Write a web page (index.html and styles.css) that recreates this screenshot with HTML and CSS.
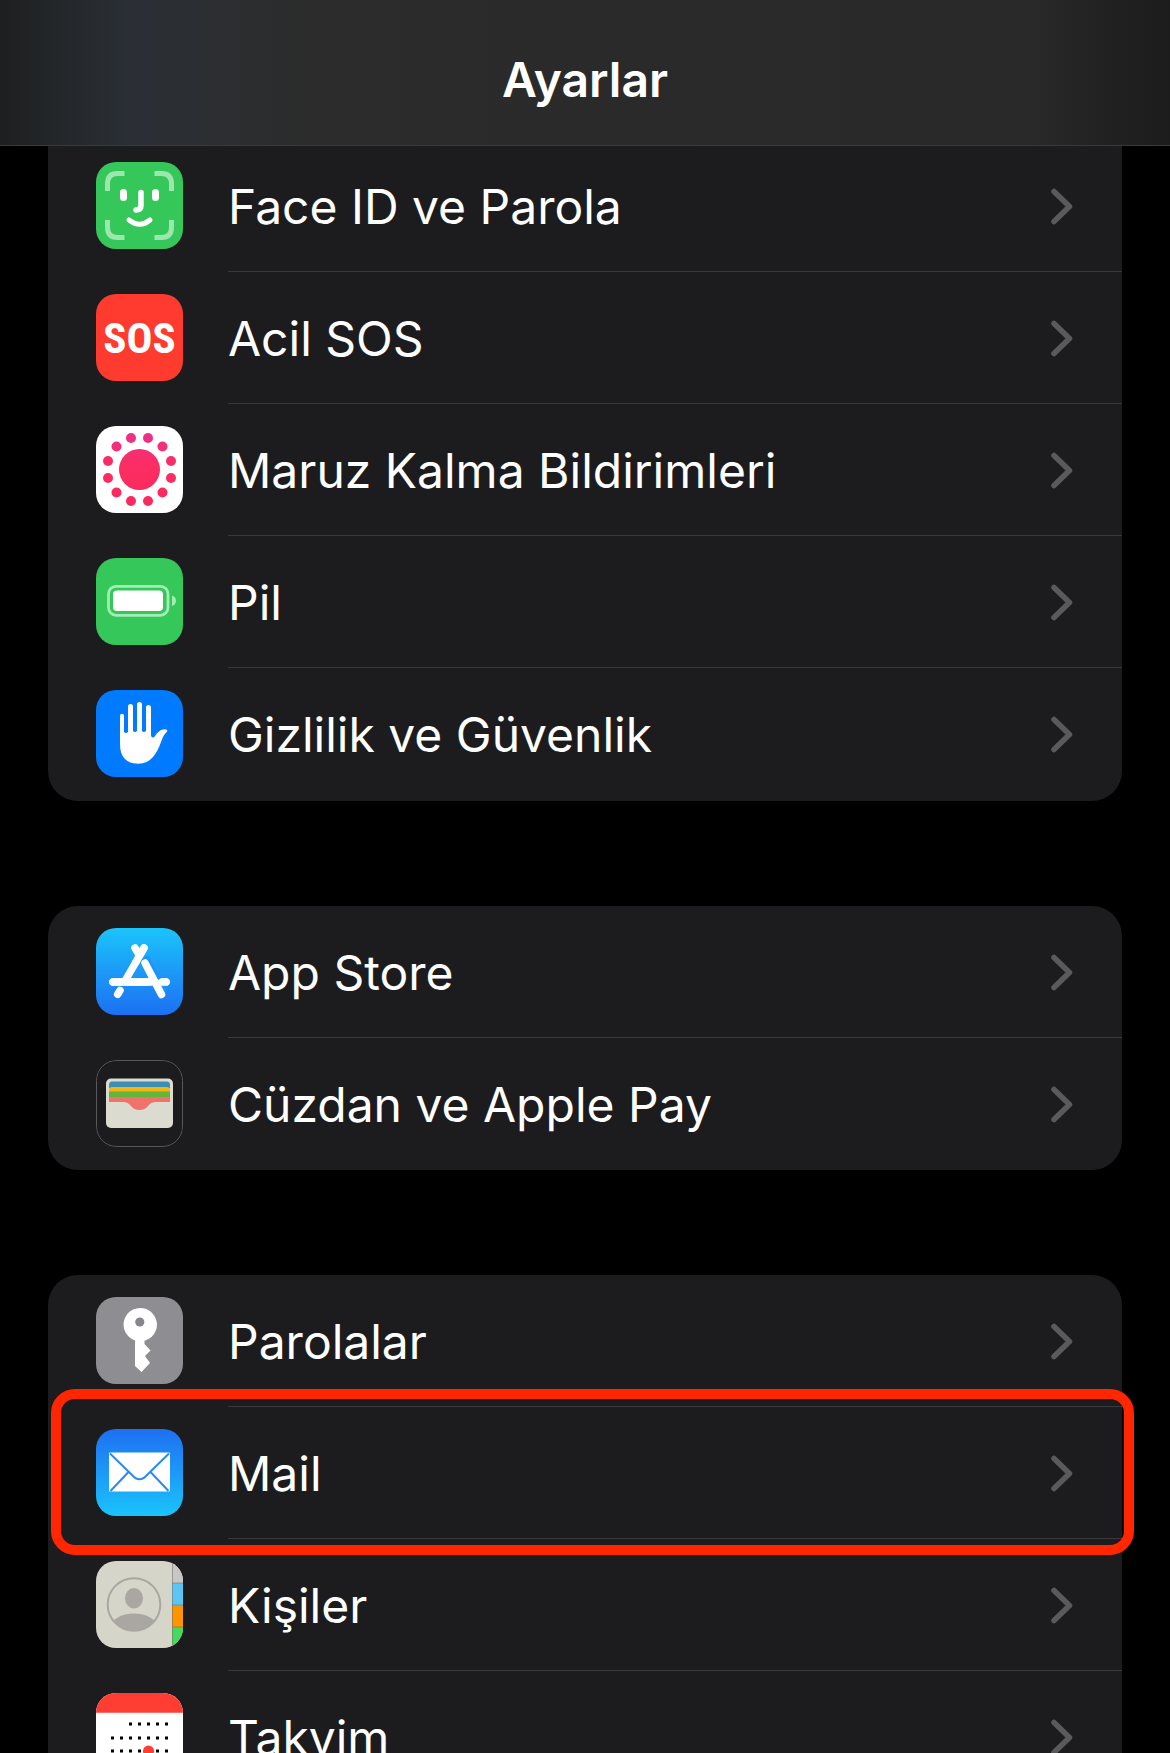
FILE: index.html
```html
<!DOCTYPE html>
<html lang="tr">
<head>
<meta charset="utf-8">
<meta name="viewport" content="width=device-width, initial-scale=1">
<title>Ayarlar</title>
<link rel="stylesheet" href="styles.css">
</head>
<body>
<svg class="defs" aria-hidden="true">
  <symbol id="chevron" viewBox="0 0 22 38"><path d="M3 4.500 18.500 19.500 3 34.500" fill="none" stroke="currentColor" stroke-width="5.500" stroke-linecap="round" stroke-linejoin="round"/></symbol>
</svg>
<div class="screen">
  <header class="bar"><h1 class="title">Ayarlar</h1></header>
  <main class="list">
    <nav class="group under-bar">
      <a class="row" href="#face-id">
        <svg class="icon green" viewBox="0 0 87 87" fill="none" stroke="#fff" stroke-linecap="round">
          <g stroke="#9be7ae" stroke-width="5" stroke-linecap="butt"><path d="M11.500 29v-7q0-10.500 10-10.500h7M58.500 11.500h7q10 0 10 10.500v7M75.500 58v7q0 10.500-10 10.500h-7M28.500 75.500h-7q-10 0-10-10.500v-7"/></g>
          <path d="M27.500 30.500v5M59.500 30.500v5" stroke-width="7"/>
          <path d="M45 30.500v13q0 4.500-5 4.500" stroke-width="5.500"/>
          <path d="M33 58q11 8.500 21 0" stroke-width="5"/>
        </svg>
        <span class="label">Face ID ve Parola</span>
        <svg class="chevron"><use href="#chevron"/></svg>
      </a>
      <a class="row" href="#sos">
        <span class="icon sos">SOS</span>
        <span class="label">Acil SOS</span>
        <svg class="chevron"><use href="#chevron"/></svg>
      </a>
      <a class="row" href="#maruz-kalma">
        <svg class="icon white" viewBox="0 0 87 87">
          <defs><linearGradient id="pink" gradientUnits="userSpaceOnUse" x1="0" y1="8" x2="0" y2="80"><stop offset="0" stop-color="#ee3089"/><stop offset=".45" stop-color="#fb2d62"/><stop offset="1" stop-color="#f92b5c"/></linearGradient></defs>
          <g fill="url(#pink)">
            <circle cx="43.500" cy="43.500" r="20.500"/>
            <circle cx="35" cy="12" r="5"/><circle cx="52" cy="12" r="5"/>
            <circle cx="20.500" cy="20.500" r="5"/><circle cx="66.500" cy="20.500" r="5"/>
            <circle cx="12" cy="35" r="5"/><circle cx="75" cy="35" r="5"/>
            <circle cx="12" cy="52" r="5"/><circle cx="75" cy="52" r="5"/>
            <circle cx="20.500" cy="66.500" r="5"/><circle cx="66.500" cy="66.500" r="5"/>
            <circle cx="35" cy="75" r="5"/><circle cx="52" cy="75" r="5"/>
          </g>
        </svg>
        <span class="label">Maruz Kalma Bildirimleri</span>
        <svg class="chevron"><use href="#chevron"/></svg>
      </a>
      <a class="row" href="#pil">
        <svg class="icon green" viewBox="0 0 87 87">
          <rect x="12.500" y="28.300" width="59.500" height="29" rx="7.500" fill="none" stroke="#a3edb4" stroke-width="2.800"/>
          <rect x="17" y="32.500" width="50" height="20.500" rx="4" fill="#fff"/>
          <path d="M76 37.500q4 1.500 4 5.300t-4 5.300z" fill="#a3edb4"/>
        </svg>
        <span class="label">Pil</span>
        <svg class="chevron"><use href="#chevron"/></svg>
      </a>
      <a class="row" href="#gizlilik">
        <svg class="icon blue" viewBox="0 0 87 87">
          <path d="M24 26q0-2.300 2-2.300t2 2.300v16q2 2 4 0V16.500q0-2.500 2.500-2.500t2.500 2.500V41q2 2 4 0V14.500q0-2.500 2.500-2.500t2.500 2.500V41q2 2 4 0V17.500q0-2.500 2.500-2.500t2.500 2.500V46q2 3 4 0q4-6 8-6.500q3-.5 4 .5q1 .7-.5 2.200q-3.500 3.300-5.500 9.800q-3 9-8 15q-6 6.800-14.500 6.800Q24 73.500 24 54z" fill="#fff"/>
        </svg>
        <span class="label">Gizlilik ve Güvenlik</span>
        <svg class="chevron"><use href="#chevron"/></svg>
      </a>
    </nav>

    <nav class="group">
      <a class="row" href="#app-store">
        <svg class="icon store" viewBox="0 0 87 87" fill="none" stroke="#fff" stroke-width="7.500" stroke-linecap="round">
          <path d="M17 54h53"/>
          <path d="M48 20 29 53M24 62.500l-2.300 3.700M39 20l4 6.500"/>
          <path d="M47 30 67 64" stroke="#1c94f8" stroke-width="11" stroke-linecap="butt"/>
          <path d="M49 35 65.500 66.500M66 54h4M48 20l-8 14M17 54h35"/>
        </svg>
        <span class="label">App Store</span>
        <svg class="chevron"><use href="#chevron"/></svg>
      </a>
      <a class="row" href="#cuzdan">
        <svg class="icon" viewBox="0 0 87 87">
          <rect x=".5" y=".5" width="86" height="86" rx="20" fill="none" stroke="#58585a"/>
          <rect x="10" y="18.500" width="67" height="49.500" rx="5" fill="#dcdbd0"/>
          <path d="M13 28v-3q0-3.500 3-3.500h55q3 0 3 3.500v3z" fill="#3b8fb5"/>
          <path d="M13 32v-2.500q0-2.500 3-2.500h55q3 0 3 2.500V32z" fill="#f4b412"/>
          <path d="M13 31.500h61v6H13z" fill="#62b43b"/>
          <path d="M13 37h61v5H60q-5 0-8 4t-8.500 4-8.500-4-8-4H13z" fill="#f0736b"/>
        </svg>
        <span class="label">Cüzdan ve Apple Pay</span>
        <svg class="chevron"><use href="#chevron"/></svg>
      </a>
    </nav>

    <nav class="group">
      <a class="row" href="#parolalar">
        <svg class="icon gray" viewBox="0 0 87 87">
          <path d="M39 43.500A16.700 16.700 0 1 1 48.500 43.800V47l6 6.500-5.500 5.500 5 7-8.500 9-6.500-6z" fill="#fff"/>
          <circle cx="43.800" cy="25" r="4.600" fill="#87878b"/>
        </svg>
        <span class="label">Parolalar</span>
        <svg class="chevron"><use href="#chevron"/></svg>
      </a>
      <a class="row highlighted" href="#mail">
        <svg class="icon mail" viewBox="0 0 87 87">
          <rect x="13" y="23.500" width="61" height="39" rx="1" fill="#fff"/>
          <path d="M14 24.500 36 46q7.500 8.500 15 0l22-21.500M32 43.500 14.500 62M55 43.500 72.500 62" fill="none" stroke="#2b8af0" stroke-width="2"/>
        </svg>
        <span class="label">Mail</span>
        <svg class="chevron"><use href="#chevron"/></svg>
      </a>
      <a class="row" href="#kisiler">
        <svg class="icon contacts" viewBox="0 0 87 87">
          <defs><clipPath id="avatar"><circle cx="38" cy="43.500" r="26.500"/></clipPath></defs>
          <path d="M76 0h11v22H76z" fill="#c9c6c5"/><path d="M76 22h11v22H76z" fill="#5bc6f6"/>
          <path d="M76 44h11v22H76z" fill="#fd9503"/><path d="M76 66h11v21H76z" fill="#47d85f"/>
          <path d="M76 22h11M76 44h11M76 66h11M76.500 0v87" stroke="#6d6a60" stroke-opacity=".5" stroke-width="1"/>
          <ellipse cx="38" cy="37.200" rx="9" ry="10.300" fill="#aaa6a1"/>
          <ellipse cx="38" cy="66" rx="23" ry="13.500" fill="#aaa6a1" clip-path="url(#avatar)"/>
          <circle cx="38" cy="43.500" r="26.300" fill="none" stroke="#aaa6a1" stroke-width="2"/>
        </svg>
        <span class="label">Kişiler</span>
        <svg class="chevron"><use href="#chevron"/></svg>
      </a>
      <a class="row" href="#takvim">
        <svg class="icon white" viewBox="0 0 87 87">
          <path d="M0 0h87v19.700H0z" fill="#ff3d33"/>
          <path d="M33 31h40" stroke="#000" stroke-width="3" stroke-dasharray="3 6"/>
          <path d="M15 45h58M15 58h58M15 71h58" stroke="#000" stroke-width="3" stroke-dasharray="3 6"/>
          <circle cx="52.500" cy="58" r="5.500" fill="#ff3d33"/>
        </svg>
        <span class="label">Takvim</span>
        <svg class="chevron"><use href="#chevron"/></svg>
      </a>
    </nav>
  </main>
</div>
</body>
</html>
```
FILE: styles.css
```css
* {
  box-sizing: border-box;
}

body {
  margin: 0;
  background: #000;
  color: #fff;
  font-family: Inter, "Liberation Sans", sans-serif;
}

.defs {
  display: none;
}

.screen {
  height: 100vh;
  overflow: hidden;
}

.bar {
  position: fixed;
  inset: 0 0 auto;
  z-index: 2;
  display: flex;
  justify-content: center;
  height: 146px;
  padding-top: 48px;
  border-bottom: 1px solid #3a3a3c;
  background: linear-gradient(90deg, #1e1f1f 0%, #23272a 5%, #2a2f35 11%, #2b2e32 17%, #2c2c2c 26%, #2a2a2a 50%, #29292a 88%, #222 94%, #1c1c1c 100%);
}

.title {
  margin: 0;
  font-size: 48px;
  line-height: 64px;
  font-weight: 600;
}

.list {
  display: flex;
  flex-direction: column;
  gap: 105px;
  padding: 140px 48px 0;
}

.group {
  border-radius: 30px;
  background: #1c1c1e;
}

/* The first group runs on beneath the bar, so its top has no corners */
.under-bar {
  padding-bottom: 1px;
  border-radius: 0 0 30px 30px;
}

.row {
  position: relative;
  display: grid;
  grid-template-columns: 87px 1fr 22px;
  column-gap: 45px;
  align-items: center;
  height: 132px;
  padding: 0 49px 1px 48px;
  color: inherit;
  text-decoration: none;
}

.row:not(:last-child)::after {
  content: "";
  position: absolute;
  right: 0;
  bottom: 0;
  left: 180px;
  height: 1px;
  background: #39393b;
}

.highlighted::before {
  content: "";
  position: absolute;
  inset: -18px -12px -16px 3px;
  z-index: 1;
  border: 10px solid #ff2600;
  border-radius: 24px;
}

.label {
  padding-top: 3px;
  font-size: 48px;
  line-height: 64px;
  white-space: nowrap;
}

.chevron {
  width: 22px;
  height: 38px;
  color: #5a5a5d;
}

.icon {
  width: 87px;
  height: 87px;
  border-radius: 20px;
}

.green {
  background: #35c759;
}

.white {
  background: #fff;
}

.blue {
  background: #007aff;
}

.gray {
  background: #8e8e92;
}

.sos {
  display: grid;
  place-items: center;
  padding-top: 2px;
  background: #ff3b30;
  font: bold 43px/1 "Roboto Condensed", Roboto, sans-serif;
}

.store {
  background: linear-gradient(#1bc4fb, #1d70f2);
}

.mail {
  background: linear-gradient(#1e6ff1, #1ac4fc);
}

.contacts {
  background: #d6d5ca;
}
```
